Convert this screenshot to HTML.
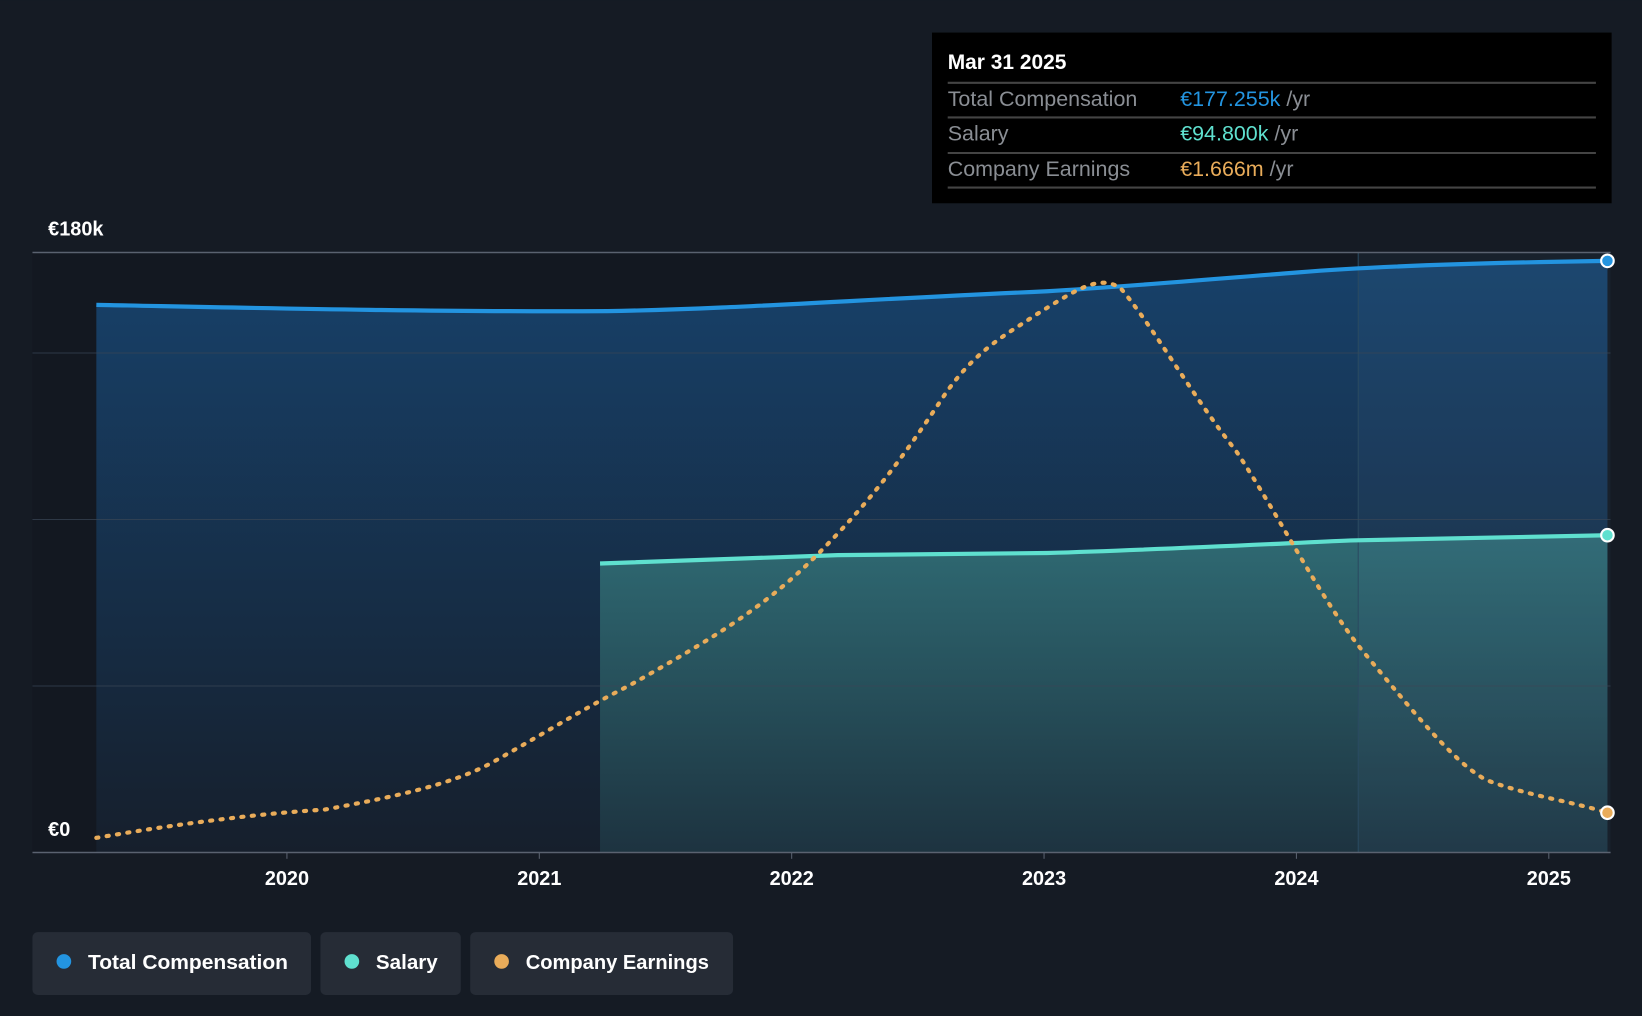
<!DOCTYPE html>
<html><head><meta charset="utf-8"><style>
html,body{margin:0;padding:0;background:#151b24;}
svg{display:block;font-family:"Liberation Sans",Roboto,sans-serif;}
</style></head><body>
<svg width="1642" height="1016" viewBox="0 0 1568 970" xmlns="http://www.w3.org/2000/svg">
<defs>
<linearGradient id="tc" x1="0" y1="0" x2="0" y2="1"><stop offset="0" stop-color="#17416a"/><stop offset="1" stop-color="#161f2c"/></linearGradient>
<linearGradient id="sal" x1="0" y1="0" x2="0" y2="1"><stop offset="0" stop-color="#2f6a73"/><stop offset="1" stop-color="#1d3340"/></linearGradient>
</defs>
<rect width="1568" height="970" fill="#151b24"/>
<rect x="31" y="241" width="1507" height="573" fill="#131821"/>
<path d="M92,291 C200,293 400,298 580,297 C700,295 800,287 1000,278 C1070,274 1150,267 1240,260 C1300,255 1400,251 1535,249 L1535,814 L92,814 Z" fill="url(#tc)"/>
<path d="M573,538 L800,530 L1000,528 C1100,525 1200,520 1290,516 L1535,511 L1535,814 L573,814 Z" fill="url(#sal)"/>
<rect x="1297" y="241" width="241" height="573" fill="#5a8fb8" opacity="0.08"/>
<line x1="1297" y1="241" x2="1297" y2="814" stroke="#2a4a60" stroke-width="1"/>
<g stroke="#3a4656" stroke-width="1" opacity="0.7">
<line x1="31" y1="337" x2="1538" y2="337"/><line x1="31" y1="496" x2="1538" y2="496"/><line x1="31" y1="655" x2="1538" y2="655"/>
</g>
<line x1="31" y1="241" x2="1538" y2="241" stroke="#5a6270" stroke-width="1.5"/>
<line x1="31" y1="814" x2="1538" y2="814" stroke="#5a6270" stroke-width="1.5"/>
<g stroke="#5a6270"><line x1="274" y1="814" x2="274" y2="820"/><line x1="515" y1="814" x2="515" y2="820"/><line x1="756" y1="814" x2="756" y2="820"/><line x1="997" y1="814" x2="997" y2="820"/><line x1="1238" y1="814" x2="1238" y2="820"/><line x1="1479" y1="814" x2="1479" y2="820"/></g>
<path d="M92,291 C200,293 400,298 580,297 C700,295 800,287 1000,278 C1070,274 1150,267 1240,260 C1300,255 1400,251 1535,249" fill="none" stroke="#2394e0" stroke-width="4"/>
<path d="M573,538 L800,530 L1000,528 C1100,525 1200,520 1290,516 L1535,511" fill="none" stroke="#5fe0cf" stroke-width="4"/>
<path d="M92,800 C150,790 230,778 310,773 C370,762 430,750 470,728 C520,700 560,675 600,655 C680,610 730,580 780,530 C830,480 860,440 900,380 C930,335 960,320 990,300 C1030,275 1050,262 1070,275 C1100,310 1140,380 1180,430 C1220,490 1260,570 1300,620 C1350,680 1390,730 1420,745 C1460,760 1500,765 1535,776" fill="none" stroke="#e9ac5a" stroke-width="4" stroke-dasharray="2 8" stroke-linecap="round"/>
<circle cx="1535" cy="249" r="6" fill="#2394e0" stroke="#fff" stroke-width="2"/>
<circle cx="1535" cy="511" r="6" fill="#5fe0cf" stroke="#fff" stroke-width="2"/>
<circle cx="1535" cy="776" r="6" fill="#e9ac5a" stroke="#fff" stroke-width="2"/>
<text x="46" y="225" fill="#fff" font-size="19" font-weight="bold">€180k</text>
<text x="46" y="798" fill="#fff" font-size="19" font-weight="bold">€0</text>
<g fill="#fff" font-size="19" font-weight="bold" text-anchor="middle">
<text x="274" y="845">2020</text><text x="515" y="845">2021</text><text x="756" y="845">2022</text><text x="997" y="845">2023</text><text x="1238" y="845">2024</text><text x="1479" y="845">2025</text>
</g>
<rect x="890" y="31" width="649" height="163" fill="#000"/>
<text x="905" y="66" fill="#fff" font-size="20" font-weight="bold">Mar 31 2025</text>
<g stroke="#444" stroke-width="2"><line x1="905" y1="79" x2="1524" y2="79"/><line x1="905" y1="112" x2="1524" y2="112"/><line x1="905" y1="146" x2="1524" y2="146"/><line x1="905" y1="179" x2="1524" y2="179"/></g>
<g font-size="20.5">
<text x="905" y="101" fill="#8a8e94">Total Compensation</text>
<text x="1127" y="101"><tspan fill="#2394e0">€177.255k</tspan><tspan fill="#8a8e94"> /yr</tspan></text>
<text x="905" y="134" fill="#8a8e94">Salary</text>
<text x="1127" y="134"><tspan fill="#5fe0cf">€94.800k</tspan><tspan fill="#8a8e94"> /yr</tspan></text>
<text x="905" y="168" fill="#8a8e94">Company Earnings</text>
<text x="1127" y="168"><tspan fill="#e9ac5a">€1.666m</tspan><tspan fill="#8a8e94"> /yr</tspan></text>
</g>
<g font-size="19.5" font-weight="bold" fill="#fff">
<rect x="31" y="890" width="266" height="60" rx="5" fill="#262c36"/>
<circle cx="61" cy="918" r="7" fill="#2394e0"/><text x="84" y="925" textLength="191" lengthAdjust="spacingAndGlyphs">Total Compensation</text>
<rect x="306" y="890" width="134" height="60" rx="5" fill="#262c36"/>
<circle cx="336" cy="918" r="7" fill="#5fe0cf"/><text x="359" y="925" textLength="59" lengthAdjust="spacingAndGlyphs">Salary</text>
<rect x="449" y="890" width="251" height="60" rx="5" fill="#262c36"/>
<circle cx="479" cy="918" r="7" fill="#e9ac5a"/><text x="502" y="925" textLength="175" lengthAdjust="spacingAndGlyphs">Company Earnings</text>
</g>
</svg>
</body></html>
